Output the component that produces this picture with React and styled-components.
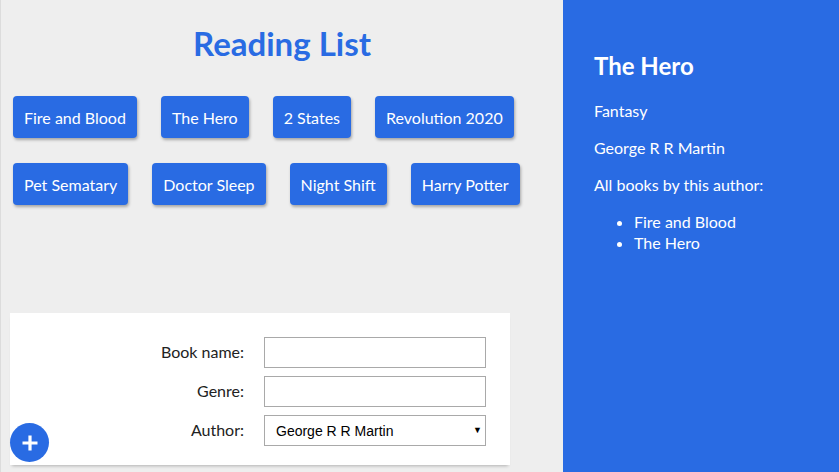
import React from "react";
import styled, { createGlobalStyle } from "styled-components";

const Global = createGlobalStyle`
  html, body { margin: 0; padding: 0; }
  body { font-family: Lato, "Open Sans", sans-serif; background: #eeeeee; }
  * { box-sizing: border-box; }
`;

const BLUE = "#296be3";

const Layout = styled.div`
  display: flex;
  width: 839px;
  height: 472px;
  overflow: hidden;
`;

const Main = styled.div`
  position: relative;
  flex: 1;
  display: flex;
  flex-direction: column;
  background: #eeeeee;
  border-left: 1px solid #dcdcdc;
`;

const Title = styled.h1`
  margin: 23px 0 0;
  text-align: center;
  color: ${BLUE};
  font-size: 33px;
  font-weight: 700;
  line-height: 40px;
`;

const BookGrid = styled.div`
  display: flex;
  flex-wrap: wrap;
  gap: 25px 24px;
  padding: 0 0 0 12px;
  margin-top: 33px;
`;

const BookButton = styled.button`
  height: 42px;
  padding: 0 11px;
  border: none;
  border-radius: 4px;
  background: ${BLUE};
  color: #fff;
  font-family: Lato, "Open Sans", sans-serif;
  font-size: 16px;
  box-shadow: 1px 2px 3px rgba(0, 0, 0, 0.3);
  cursor: pointer;
`;

const FormCard = styled.form`
  margin: auto 0 7px 9px;
  width: 500px;
  background: #fff;
  padding: 24px 24px 19px 0;
  display: grid;
  grid-template-columns: 234px 222px;
  column-gap: 20px;
  row-gap: 8px;
  align-items: center;
  box-shadow: 0 3px 3px -2px rgba(0, 0, 0, 0.25);
`;

const Label = styled.label`
  text-align: right;
  font-size: 16px;
  color: #222;
  margin-top: -3px;
`;

const TextInput = styled.input`
  height: 31px;
  width: 222px;
  border: 1px solid #a9a9a9;
  font-size: 14px;
  padding: 0 8px;
`;

const SelectWrap = styled.div`
  position: relative;
  width: 222px;
  height: 31px;
`;

const Select = styled.select`
  appearance: none;
  width: 100%;
  height: 100%;
  border: 1px solid #a9a9a9;
  background: #fff;
  font-family: "Liberation Sans", Arial, sans-serif;
  font-size: 14px;
  color: #000;
  padding: 0 24px 0 11px;
`;

const Arrow = styled.span`
  position: absolute;
  right: 4px;
  top: 9px;
  font-size: 9px;
  line-height: 12px;
  color: #000;
  pointer-events: none;
`;

const Fab = styled.button`
  position: absolute;
  left: 9px;
  bottom: 10px;
  width: 39px;
  height: 39px;
  border-radius: 50%;
  border: none;
  background: ${BLUE};
  display: flex;
  align-items: center;
  justify-content: center;
  padding: 0;
  cursor: pointer;
`;

const Side = styled.aside`
  width: 276px;
  background: ${BLUE};
  color: #fff;
  padding: 50px 20px 0 31px;
`;

const SideTitle = styled.h2`
  margin: 0 0 18px;
  font-size: 24px;
  font-weight: 700;
  line-height: 32px;
`;

const SideText = styled.p`
  margin: 0 0 16px;
  font-size: 16px;
  line-height: 21px;
`;

const SideList = styled.ul`
  margin: 0;
  padding-left: 40px;
  font-size: 16px;
  line-height: 21px;
`;

const books = [
  "Fire and Blood",
  "The Hero",
  "2 States",
  "Revolution 2020",
  "Pet Sematary",
  "Doctor Sleep",
  "Night Shift",
  "Harry Potter",
];

export default function App() {
  return (
    <>
      <Global />
      <Layout>
        <Main>
          <Title>Reading List</Title>
          <BookGrid>
            {books.map((b) => (
              <BookButton key={b} type="button">
                {b}
              </BookButton>
            ))}
          </BookGrid>
          <FormCard onSubmit={(e) => e.preventDefault()}>
            <Label htmlFor="bn">Book name:</Label>
            <TextInput id="bn" type="text" />
            <Label htmlFor="gn">Genre:</Label>
            <TextInput id="gn" type="text" />
            <Label htmlFor="au">Author:</Label>
            <SelectWrap>
              <Select id="au" defaultValue="George R R Martin">
                <option>George R R Martin</option>
                <option>Chetan Bhagat</option>
                <option>Stephen King</option>
                <option>J K Rowling</option>
              </Select>
              <Arrow>▼</Arrow>
            </SelectWrap>
          </FormCard>
          <Fab type="button" aria-label="Add book">
            <svg width="18" height="18" viewBox="0 0 18 18">
              <path d="M9 1.5v15M1.5 9h15" stroke="#fff" strokeWidth="3.2" />
            </svg>
          </Fab>
        </Main>
        <Side>
          <SideTitle>The Hero</SideTitle>
          <SideText>Fantasy</SideText>
          <SideText>George R R Martin</SideText>
          <SideText>All books by this author:</SideText>
          <SideList>
            <li>Fire and Blood</li>
            <li>The Hero</li>
          </SideList>
        </Side>
      </Layout>
    </>
  );
}
